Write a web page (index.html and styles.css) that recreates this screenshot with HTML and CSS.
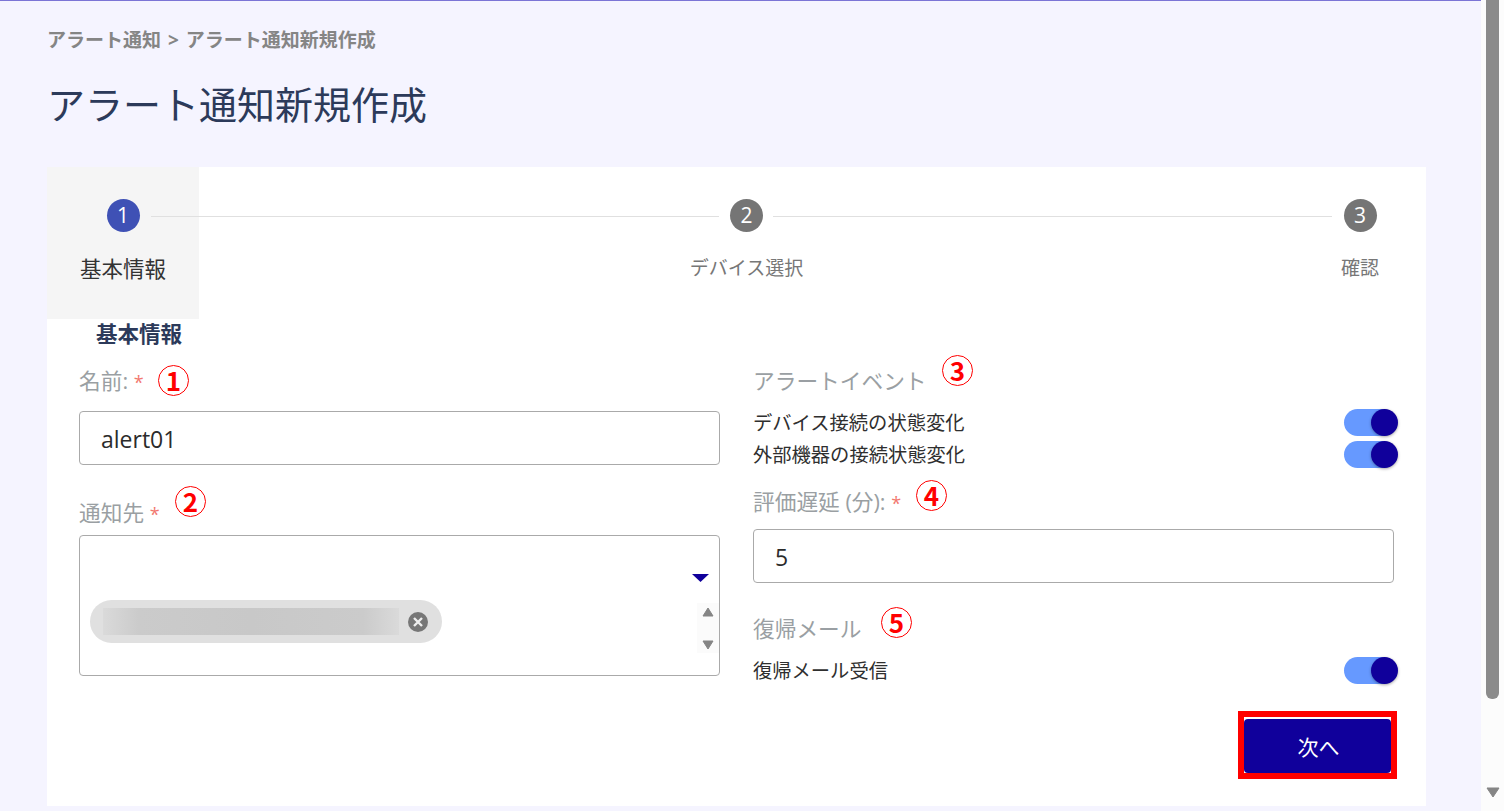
FILE: index.html
```html
<!DOCTYPE html>
<html lang="ja">
<head>
<meta charset="utf-8">
<title>アラート通知新規作成</title>
<link rel="stylesheet" href="styles.css">
</head>
<body>
<div class="page">
  <main class="main">
    <div class="crumbs">アラート通知 &gt; アラート通知新規作成</div>
    <h1 class="title">アラート通知新規作成</h1>
    <section class="card">
      <div class="stepper">
        <div class="step step-active"><span class="dot dot-active">1</span><span class="step-label">基本情報</span></div>
        <div class="line line-a"></div>
        <div class="step step-mid"><span class="dot">2</span><span class="step-label">デバイス選択</span></div>
        <div class="line line-b"></div>
        <div class="step step-end"><span class="dot">3</span><span class="step-label">確認</span></div>
      </div>
      <h2 class="heading">基本情報</h2>
      <div class="form">
        <div class="col">
          <div class="label">名前: <span class="req">*</span></div>
          <div class="input input-a">alert01</div>
          <div class="label label-notify">通知先 <span class="req">*</span></div>
          <div class="select">
            <div class="select-top">
              <svg class="caret" viewBox="0 0 17 8"><path d="M0 0H17L8.5 8Z"/></svg>
            </div>
            <div class="select-body">
              <div class="chip">
                <div class="chip-mask"></div>
                <svg class="chip-x" viewBox="0 0 20 20"><circle cx="10" cy="10" r="10"/><path d="M6 6L14 14M14 6L6 14"/></svg>
              </div>
              <div class="spin">
                <svg class="spin-arrow" viewBox="0 0 12 10"><path d="M6 1L11 9H1Z"/></svg>
                <svg class="spin-arrow" viewBox="0 0 12 10"><path d="M1 1H11L6 9Z"/></svg>
              </div>
            </div>
          </div>
        </div>
        <div class="col">
          <div class="label">アラートイベント</div>
          <div class="row row-first"><span>デバイス接続の状態変化</span><span class="toggle"></span></div>
          <div class="row"><span>外部機器の接続状態変化</span><span class="toggle"></span></div>
          <div class="label label-delay">評価遅延 (分): <span class="req">*</span></div>
          <div class="input input-b">5</div>
          <div class="label label-return">復帰メール</div>
          <div class="row row-first"><span>復帰メール受信</span><span class="toggle"></span></div>
        </div>
      </div>
      <div class="actions"><button class="next" type="button">次へ</button></div>
      <span class="anno anno-1">1</span>
      <span class="anno anno-2">2</span>
      <span class="anno anno-3">3</span>
      <span class="anno anno-4">4</span>
      <span class="anno anno-5">5</span>
      <div class="frame"></div>
    </section>
  </main>
  <aside class="scrollbar">
    <div class="thumb"></div>
    <svg class="scroll-down" viewBox="0 0 14 11"><path d="M1 1H13L7 10Z"/></svg>
  </aside>
</div>
</body>
</html>
```

FILE: styles.css
```css
* { box-sizing: border-box; }
html, body { margin: 0; height: 811px; overflow: hidden; }
body {
  background: #f5f4ff;
  font-family: "Open Sans", "Noto Sans CJK JP", sans-serif;
  color: #333;
}
.page { display: flex; width: 1504px; height: 811px; }
.main {
  width: 1481px;
  height: 811px;
  padding: 0 55px 0 47px;
  border-top: 1px solid #7b74d6;
}
.crumbs {
  margin-top: 27px;
  font-size: 19px;
  line-height: 24px;
  font-weight: 700;
  word-spacing: 2px;
  color: #858585;
}
.title {
  margin: 27px 0 0;
  font-size: 38px;
  line-height: 50px;
  font-weight: 400;
  color: #2c3a5a;
}
.card {
  position: relative;
  margin-top: 38px;
  height: 639px;
  background: #fff;
}
.stepper { display: flex; height: 152px; }
.step {
  display: flex;
  flex-direction: column;
  align-items: center;
  padding-top: 32px;
  flex: none;
}
.step-active { width: 152px; background: #f5f5f5; }
.step-mid { width: 113px; }
.step-end { width: 38px; margin-right: 47px; }
.dot {
  width: 33px;
  height: 33px;
  border-radius: 50%;
  background: #757575;
  color: #fff;
  font-size: 21px;
  line-height: 33px;
  text-align: center;
}
.dot-active { background: #3f51b5; }
.step-label {
  margin-top: 23px;
  font-size: 19px;
  line-height: 26px;
  white-space: nowrap;
  color: #777;
}
.step-active .step-label { margin-top: 24px; font-size: 21.5px; color: #333; }
.line { height: 1px; margin-top: 49px; background: #e0e0e0; }
.line-a { flex: 0 0 568px; margin-left: -48px; margin-right: -29px; }
.line-b { flex: 1; margin-left: -30px; margin-right: 9px; }
.heading {
  margin: 0 0 2px;
  padding-left: 49px;
  font-size: 21.5px;
  line-height: 30px;
  font-weight: 700;
  color: #2c3a5a;
}
.form {
  display: grid;
  grid-template-columns: 641px 641px;
  column-gap: 33px;
  padding: 0 32px;
}
.col { display: flex; flex-direction: column; min-width: 0; }
.label {
  height: 30px;
  margin-top: 15px;
  font-size: 21.7px;
  line-height: 30px;
  color: #9a9fa3;
}
.req { color: #f2786f; font-size: 18px; line-height: 1; }
.label-notify { margin-top: 33px; }
.label-delay { margin-top: 17px; }
.label-return { margin-top: 31px; }
.input {
  height: 54px;
  padding-left: 21px;
  border: 1px solid #aaa;
  border-radius: 4px;
  font-size: 23px;
  line-height: 54px;
  color: #2b2b2b;
}
.input-a { margin-top: 15px; }
.input-b { margin-top: 12px; }
.select {
  height: 141px;
  margin-top: 7px;
  border: 1px solid #aaa;
  border-radius: 4px;
}
.select-top { display: flex; justify-content: flex-end; padding: 38px 10px 0 0; }
.caret { display: block; width: 17px; height: 8px; fill: #10009b; }
.select-body {
  display: flex;
  justify-content: space-between;
  align-items: flex-start;
  margin-top: 18px;
  padding-left: 10px;
}
.chip {
  display: flex;
  align-items: center;
  width: 352px;
  height: 43px;
  padding-left: 13px;
  border-radius: 22px;
  background: #e0e0e0;
}
.chip-mask {
  width: 296px;
  height: 27px;
  background: linear-gradient(90deg, #dadada, #cbcbcb 12%, #c8c8c8 50%, #cbcbcb 88%, #dadada);
}
.chip-x { width: 20px; height: 20px; margin-left: 9px; fill: #777; stroke: none; }
.chip-x path { fill: none; stroke: #eee; stroke-width: 2.4; }
.spin {
  display: flex;
  flex-direction: column;
  align-items: flex-end;
  justify-content: space-between;
  width: 22px;
  height: 50px;
  margin-top: 3px;
  padding: 4px 5px 3px 0;
  background: #fbfbfb;
}
.spin-arrow { display: block; width: 12px; height: 10px; fill: #858585; stroke: #858585; stroke-linejoin: round; }
.row {
  display: flex;
  justify-content: space-between;
  align-items: center;
  height: 32px;
  margin-right: -4px;
  font-size: 19.3px;
  color: #2f2f2f;
}
.row-first { margin-top: 10px; }
.toggle {
  position: relative;
  width: 52px;
  height: 27px;
  margin-right: 2px;
  border-radius: 14px;
  background: #6699ff;
}
.toggle::after {
  content: "";
  position: absolute;
  top: 0;
  right: -2px;
  width: 27px;
  height: 27px;
  border-radius: 50%;
  background: #10009b;
  box-shadow: 0 1px 3px rgba(0, 0, 0, .35);
}
.actions { display: flex; justify-content: flex-end; margin-top: 33px; padding-right: 35px; }
.next {
  width: 147px;
  height: 54px;
  padding: 0 0 0 2px;
  border: 0;
  border-radius: 4px;
  background: #10009b;
  color: #fff;
  font-family: inherit;
  font-size: 21px;
}
.anno {
  position: absolute;
  width: 31px;
  height: 31px;
  border: 1px solid #f00;
  border-radius: 50%;
  color: #f00;
  font-family: "Noto Sans CJK JP", sans-serif;
  font-size: 26px;
  font-weight: 700;
  line-height: 28px;
  text-align: center;
}
.anno-1 { left: 111px; top: 198px; }
.anno-2 { left: 128px; top: 319px; }
.anno-3 { left: 895px; top: 188px; }
.anno-4 { left: 869px; top: 313px; }
.anno-5 { left: 834px; top: 440px; }
.frame {
  position: absolute;
  left: 1191px;
  top: 544px;
  width: 159px;
  height: 68px;
  border: 6px solid #f00;
}
.scrollbar {
  display: flex;
  flex-direction: column;
  align-items: center;
  width: 23px;
  height: 811px;
  background: #fcfcfc;
}
.thumb {
  width: 13px;
  height: 699px;
  background: #8b8b8b;
  border-radius: 0 0 6px 6px;
}
.scroll-down { width: 14px; height: 11px; margin-top: 88px; fill: #858585; stroke: #858585; stroke-linejoin: round; }
```
